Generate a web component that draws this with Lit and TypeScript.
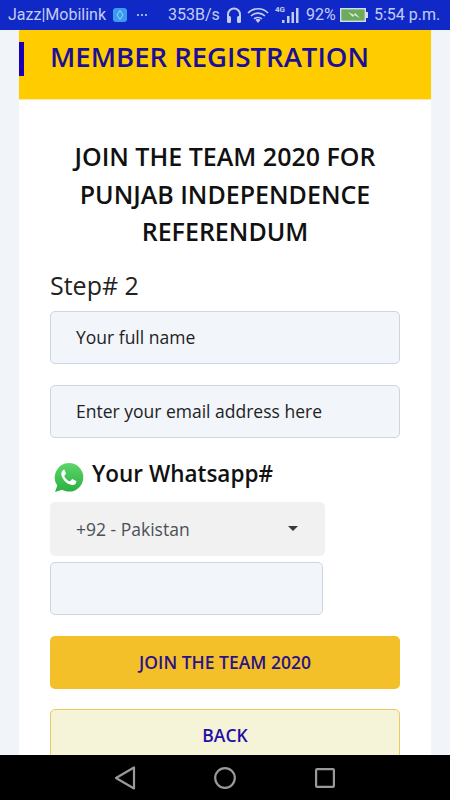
import { LitElement, html, css } from "lit";
import { customElement } from "lit/decorators.js";

@customElement("app-root")
export class AppRoot extends LitElement {
  static styles = css`
    :host { display: block; width: 450px; height: 800px; font-family: "Open Sans", sans-serif; background: #f1f4f9; }
    * { box-sizing: border-box; }
    .screen { height: 800px; display: flex; flex-direction: column; overflow: hidden; }
    .status { height: 30px; flex: none; background: #1029c6; color: #c3cdf2; font: 400 16px/30px Roboto, sans-serif; display: flex; align-items: center; padding-left: 8px; white-space: nowrap; }
    .carrier { width: 105px; }
    .chip { width: 14px; height: 14px; border-radius: 3px; background: #3a9bf0; display: flex; align-items: center; justify-content: center; }
    .dots { margin-left: 9px; width: 14px; display: flex; }
    .speed { margin-left: 18px; width: 56px; }
    .st-icons { display: flex; align-items: center; }
    .head { margin-left: 2px; display: block; }
    .wifi { margin-left: 5px; display: block; }
    .sig { margin-left: 6px; display: block; }
    .pct { margin-left: 7px; width: 32px; }
    .batt { margin-left: 2px; display: block; }
    .time { margin-left: 6px; }
    .main { flex: 1; min-height: 0; overflow: hidden; padding: 0 19px; }
    .card { background: #fff; height: 100%; }
    .banner { height: 69px; background: #ffcc00; padding: 12px 0 0; display: flex; align-items: flex-start; box-shadow: 0 1px 1px #f6e9b2; }
    .mark { width: 5px; height: 34px; background: #1a00b4; flex: none; }
    .banner h1 { margin: -1px 0 0 26px; font-size: 27.5px; line-height: 32px; font-weight: 600; color: #1c0e96; white-space: nowrap; }
    .body { padding: 39px 31px 0; }
    h2 { margin: 0; text-align: center; font-size: 25px; line-height: 37.5px; font-weight: 600; color: #111; }
    .step { font-size: 25px; line-height: 32px; color: #222; margin-top: 18px; }
    .field { height: 53px; background: #f2f5fa; border: 1px solid #ccd6e0; border-radius: 5px; padding-left: 25px; display: flex; align-items: center; font-size: 17.5px; color: #222; }
    .name { margin-top: 10px; }
    .email { margin-top: 21px; }
    .wa { display: flex; align-items: flex-start; margin-top: 21px; height: 43px; padding-left: 4px; }
    .wa svg { display: block; margin-top: 3px; }
    .wa span { margin-left: 8px; font-size: 22.5px; line-height: 30px; font-weight: 600; color: #111; }
    .select { width: 275px; height: 54px; background: #f1f1f1; border-radius: 5px; padding: 0 26px; display: flex; align-items: center; justify-content: space-between; font-size: 17.5px; color: #495057; }
    .caret { width: 0; height: 0; border-left: 5.5px solid transparent; border-right: 5.5px solid transparent; border-top: 5.5px solid #343a40; margin-right: 1px; }
    .phone { width: 273px; margin-top: 6px; }
    .btn { height: 53px; border-radius: 5px; display: flex; align-items: center; justify-content: center; font-size: 17.5px; font-weight: 600; }
    .join { margin-top: 21px; background: #f4c02a; color: #2a1289; }
    .back { margin-top: 20px; background: #f5f3d8; border: 1px solid #eccb5d; color: #1f0fa8; }
    .nav { height: 45px; flex: none; background: #000; display: flex; align-items: center; padding-left: 114px; }
    .nav svg { display: block; }
    .nav .c { margin-left: 78px; }
    .nav .s { margin-left: 79px; }
  `;

  render() {
    return html`<div class="screen">
      <div class="status">
        <span class="carrier">Jazz|Mobilink</span>
        <span class="chip"><svg width="8" height="10" viewBox="0 0 8 10"><path d="M4 0.5 7 5 4 9.5 1 5z" fill="none" stroke="#9fd2fb" stroke-width="1"/></svg></span>
        <span class="dots"><svg width="12" height="4" viewBox="0 0 12 4"><circle cx="2" cy="2" r="1.1" fill="#c3cdf2"/><circle cx="6" cy="2" r="1.1" fill="#c3cdf2"/><circle cx="10" cy="2" r="1.1" fill="#c3cdf2"/></svg></span>
        <span class="speed">353B/s</span>
        <span class="st-icons">
          <svg class="head" width="16" height="18" viewBox="0 0 16 18"><path d="M2 13V8.500a6 6 0 0 1 12 0V13" fill="none" stroke="#c3cdf2" stroke-width="2"/><rect x="1" y="10" width="4" height="7" rx="1.500" fill="#c3cdf2"/><rect x="11" y="10" width="4" height="7" rx="1.500" fill="#c3cdf2"/></svg>
          <svg class="wifi" width="22" height="18" viewBox="0 0 22 18"><path d="M1 7a14 14 0 0 1 20 0M4 10a10 10 0 0 1 14 0M7 13a6 6 0 0 1 8 0" fill="none" stroke="#c3cdf2" stroke-width="1.600"/><path d="M11 17l-2.500-3a3.500 3.500 0 0 1 5 0z" fill="#c3cdf2"/></svg>
          <svg class="sig" width="24" height="20" viewBox="0 0 24 20"><text x="0" y="7" font-family="Roboto, sans-serif" font-size="8" font-weight="700" fill="#c3cdf2">4G</text><rect x="7" y="15" width="2.500" height="3" fill="#c3cdf2"/><rect x="12" y="11" width="2.500" height="7" fill="#c3cdf2"/><rect x="16.500" y="7" width="2.500" height="11" fill="#c3cdf2"/><rect x="21" y="3" width="2.500" height="15" fill="#c3cdf2"/></svg>
        </span>
        <span class="pct">92%</span>
        <svg class="batt" width="28" height="14" viewBox="0 0 28 14"><rect x="0.700" y="0.700" width="24.600" height="12.600" fill="#6cab5c" stroke="#d5dcef" stroke-width="1.400"/><rect x="26" y="4" width="2" height="6" fill="#d5dcef"/><path d="M8 4l6 3 1-2 5 5-6-3-1 2z" fill="#e6f0d8"/></svg>
        <span class="time">5:54 p.m.</span>
      </div>
      <div class="main">
        <div class="card">
          <div class="banner"><span class="mark"></span><h1>MEMBER REGISTRATION</h1></div>
          <div class="body">
            <h2>JOIN THE TEAM 2020 FOR<br />PUNJAB INDEPENDENCE<br />REFERENDUM</h2>
            <div class="step">Step# 2</div>
            <div class="field name">Your full name</div>
            <div class="field email">Enter your email address here</div>
            <div class="wa">
              <svg width="30" height="31" viewBox="0 0 30 31">
                <defs><linearGradient id="g" x1="0" y1="0" x2="0" y2="1"><stop offset="0" stop-color="#5fd568"/><stop offset="1" stop-color="#28b043"/></linearGradient></defs>
                <path d="M15 1a14.300 14.300 0 0 1 0 28.600c-2.500 0-4.900-.6-7-1.800L1 30l2.300-6.600A14.300 14.300 0 0 1 15 1z" fill="url(#g)"/>
                <path d="M10.600 7.600c-.7 0-1.400.3-2 1-1.300 1.400-1.700 3.500-.8 5.800 1.400 3.600 4.600 6.900 8.400 8.200 2.300.8 4.300.2 5.500-1.200.7-.8.8-1.800.6-2.400l-3.500-1.800c-.4-.2-.8-.1-1.100.3l-1.200 1.500c-.3.3-.7.4-1.100.2-2.100-.9-3.900-2.600-5-4.700-.2-.4-.1-.8.2-1.100l1-1.200c.3-.3.3-.7.2-1.100l-1.500-3.500c-.2-.3-.4-.5-.7-.5z" fill="#fff"/>
              </svg>
              <span>Your Whatsapp#</span>
            </div>
            <div class="select"><span>+92 - Pakistan</span><span class="caret"></span></div>
            <div class="field phone"></div>
            <div class="btn join">JOIN THE TEAM 2020</div>
            <div class="btn back">BACK</div>
          </div>
        </div>
      </div>
      <div class="nav">
        <svg width="22" height="24" viewBox="0 0 22 24"><path d="M20 1.500V22.500L2 12z" fill="none" stroke="#9a9a9a" stroke-width="2.200" stroke-linejoin="round"/></svg>
        <svg class="c" width="22" height="22" viewBox="0 0 22 22"><circle cx="11" cy="11" r="9.800" fill="none" stroke="#9a9a9a" stroke-width="2.200"/></svg>
        <svg class="s" width="20" height="20" viewBox="0 0 20 20"><rect x="1.100" y="1.100" width="17.800" height="17.800" rx="1" fill="none" stroke="#9a9a9a" stroke-width="2.200"/></svg>
      </div>
    </div>`;
  }
}
